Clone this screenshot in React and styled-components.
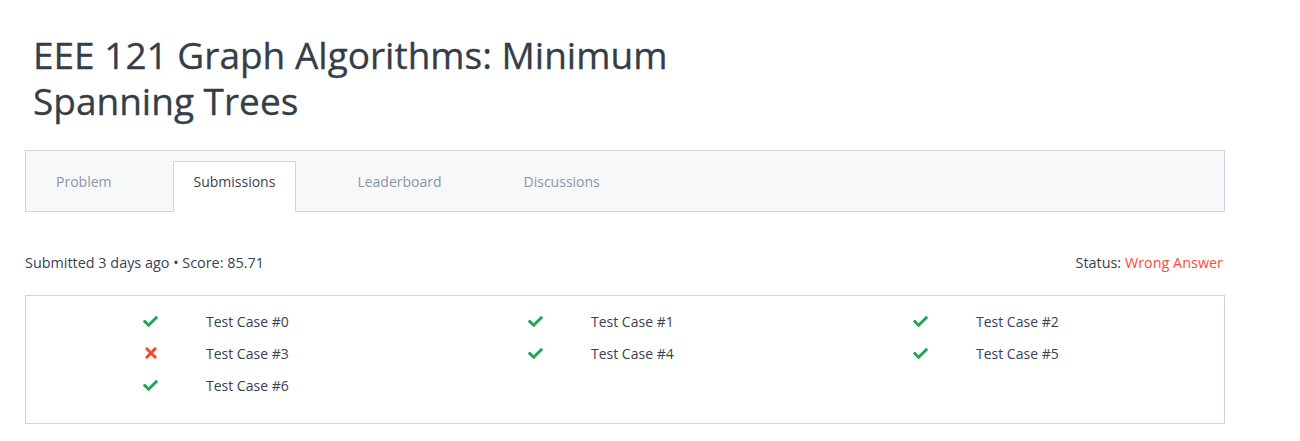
import React from 'react';
import styled, { createGlobalStyle } from 'styled-components';
import { FaCheck } from 'react-icons/fa';

const GlobalStyle = createGlobalStyle`
  body {
    margin: 0;
    background: #fff;
    font-family: 'Open Sans', 'Liberation Sans', sans-serif;
    color: #39424e;
  }
`;

const Page = styled.div`
  width: 1200px;
  padding: 0 0 0 25px;
`;

const Title = styled.h1`
  margin: 0;
  padding: 32px 0 0 8px;
  width: 680px;
  font-size: 37px;
  font-weight: 400;
  line-height: 46px;
  color: #353d48;
  -webkit-text-stroke: 0.3px #353d48;
`;

const TabBar = styled.div`
  margin-top: 26px;
  height: 60px;
  display: flex;
  align-items: flex-end;
  gap: 40px;
  padding-left: 9px;
  background: #f7f8fa;
  border: 1px solid #d0d3da;
`;

const Tab = styled.div`
  height: 51px;
  padding: 10px 20px 0;
  box-sizing: border-box;
  font-size: 14px;
  line-height: 20px;
  margin-bottom: -1px;
  color: ${(p) => (p.$active ? '#39424e' : '#8b96a4')};
  background: ${(p) => (p.$active ? '#fff' : 'transparent')};
  border: 1px solid ${(p) => (p.$active ? '#d0d3da' : 'transparent')};
  border-bottom: none;
`;

const Meta = styled.div`
  display: flex;
  justify-content: space-between;
  align-items: center;
  margin-top: 41px;
  padding-right: 2px;
  font-size: 14.4px;
  line-height: 20px;
`;

const Status = styled.span`
  color: #ff4a3a;
`;

const Results = styled.div`
  margin-top: 22px;
  border: 1px solid #d0d3da;
  padding: 9px 0 22px 111px;
  display: grid;
  grid-template-columns: repeat(3, 385px);
  grid-auto-rows: 32px;
`;

const Case = styled.div`
  display: flex;
  align-items: center;
  font-size: 14px;
`;

const IconCell = styled.span`
  width: 69px;
  display: flex;
  align-items: center;
  font-size: 15px;
  color: ${(p) => (p.$pass ? '#1ba94c' : '#f4472f')};
  svg {
    margin-left: ${(p) => (p.$pass ? '6px' : '8px')};
  }
`;

const Cross = () => (
  <svg width="12" height="12" viewBox="0 0 12 12">
    <path d="M2 2 L10 10 M10 2 L2 10" stroke="currentColor" strokeWidth="3" strokeLinecap="square" />
  </svg>
);

const cases = [true, true, true, false, true, true, true];

export default function App() {
  return (
    <>
      <GlobalStyle />
      <Page>
        <Title>EEE 121 Graph Algorithms: Minimum Spanning Trees</Title>
        <TabBar>
          <Tab>Problem</Tab>
          <Tab $active>Submissions</Tab>
          <Tab>Leaderboard</Tab>
          <Tab>Discussions</Tab>
        </TabBar>
        <Meta>
          <span>Submitted 3 days ago • Score: 85.71</span>
          <span>
            Status: <Status>Wrong Answer</Status>
          </span>
        </Meta>
        <Results>
          {cases.map((pass, i) => (
            <Case key={i}>
              <IconCell $pass={pass}>{pass ? <FaCheck /> : <Cross />}</IconCell>
              Test Case #{i}
            </Case>
          ))}
        </Results>
      </Page>
    </>
  );
}
